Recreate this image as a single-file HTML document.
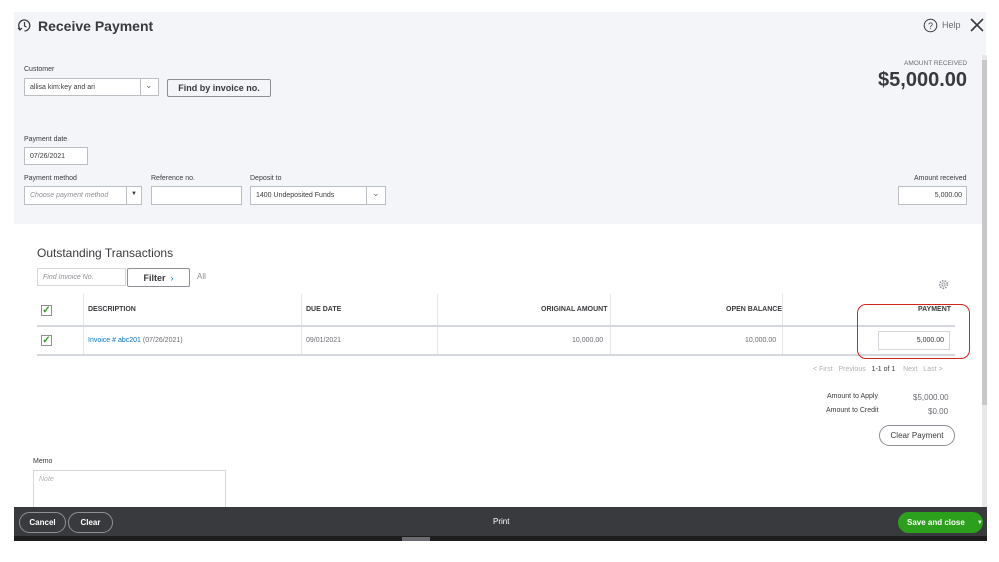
<!DOCTYPE html>
<html><head><meta charset="utf-8"><style>
*{box-sizing:border-box;margin:0;padding:0}
body{width:999px;height:562px;background:#fff;font-family:"Liberation Sans",sans-serif;color:#393a3d;position:relative;overflow:hidden}
.a{position:absolute}
.hdr{left:14px;top:12px;width:972px;height:212px;background:#f4f5f8}
.lbl{font-size:7px;color:#393a3d}
.inp{background:#fff;border:1px solid #bbbec3;font-size:7px;color:#393a3d;padding-left:5px;display:flex;align-items:center}
.th{font-size:7px;font-weight:bold;color:#393a3d}
.td{font-size:7px;color:#6b6c72}
.cb{width:11px;height:11px;border:1px solid #8d9096;background:#fff;color:#2ca01c;font-size:10px;line-height:9px;text-align:center;font-weight:bold}
.vl{width:1px;background:#e3e5e8}
.btn{border:1px solid #8d9096;border-radius:12px;color:#fff;font-size:8px;font-weight:bold;display:flex;align-items:center;justify-content:center}
</style></head><body>
<div class="a hdr"></div>
<svg class="a" style="left:17px;top:18px" width="15" height="15" viewBox="0 0 15 15"><path d="M3 11A5.5 5.5 0 1 1 7.5 13" fill="none" stroke="#393a3d" stroke-width="1.3"/><path d="M1 10l2 2 2-2" fill="none" stroke="#393a3d" stroke-width="1.2"/><path d="M7.5 4v4l2 1" fill="none" stroke="#393a3d" stroke-width="1.2"/></svg>
<div class="a" style="left:38px;top:18px;font-size:14px;font-weight:bold">Receive Payment</div>
<svg class="a" style="left:923px;top:18px" width="15" height="15" viewBox="0 0 15 15"><circle cx="7.5" cy="7.5" r="6.3" fill="none" stroke="#393a3d" stroke-width="1"/><text x="7.5" y="11" font-size="9" text-anchor="middle" font-family="Liberation Sans" fill="#393a3d">?</text></svg>
<div class="a" style="left:942px;top:20px;font-size:9px;color:#6b6c72">Help</div>
<svg class="a" style="left:970px;top:18px" width="14" height="14" viewBox="0 0 14 14"><path d="M1 1L13 13M13 1L1 13" stroke="#393a3d" stroke-width="1.6"/></svg>
<div class="a lbl" style="left:24px;top:66px">Customer</div>
<div class="a inp" style="left:24px;top:78px;width:135px;height:18px">allisa kim:key and ari</div>
<div class="a" style="left:140px;top:79px;width:1px;height:16px;background:#bbbec3"></div>
<div class="a" style="left:145px;top:80px;font-size:9px;color:#6b6c72">⌄</div>
<div class="a" style="left:167px;top:79px;width:104px;height:18px;border:1px solid #8d9096;border-radius:2px;background:#f4f5f8;font-size:9px;font-weight:bold;display:flex;align-items:center;justify-content:center">Find by invoice no.</div>
<div class="a" style="left:904px;top:60px;font-size:6.5px;color:#6b6c72">AMOUNT RECEIVED</div>
<div class="a" style="left:860px;top:69px;width:107px;text-align:right;font-size:20px;font-weight:bold;color:#393a3d">$5,000.00</div>
<div class="a lbl" style="left:24px;top:136px">Payment date</div>
<div class="a inp" style="left:24px;top:147px;width:64px;height:18px">07/26/2021</div>
<div class="a lbl" style="left:24px;top:175px">Payment method</div>
<div class="a inp" style="left:24px;top:186px;width:118px;height:19px;color:#8d9096;font-style:italic">Choose payment method</div>
<div class="a" style="left:126px;top:187px;width:1px;height:17px;background:#bbbec3"></div>
<div class="a" style="left:131px;top:191px;font-size:6px">▼</div>
<div class="a lbl" style="left:151px;top:175px">Reference no.</div>
<div class="a inp" style="left:151px;top:186px;width:91px;height:19px"></div>
<div class="a lbl" style="left:250px;top:175px">Deposit to</div>
<div class="a inp" style="left:250px;top:186px;width:136px;height:19px">1400 Undeposited Funds</div>
<div class="a" style="left:366px;top:187px;width:1px;height:17px;background:#bbbec3"></div>
<div class="a" style="left:372px;top:188px;font-size:9px;color:#6b6c72">⌄</div>
<div class="a lbl" style="left:914px;top:175px">Amount received</div>
<div class="a inp" style="left:898px;top:186px;width:69px;height:19px;justify-content:flex-end;padding-right:4px">5,000.00</div>
<div class="a" style="left:37px;top:246px;font-size:12px;color:#393a3d">Outstanding Transactions</div>
<div class="a inp" style="left:37px;top:268px;width:89px;height:18px;color:#8d9096;font-style:italic;border-color:#d4d7dc">Find Invoice No.</div>
<div class="a" style="left:127px;top:268px;width:63px;height:19px;border:1px solid #8d9096;border-radius:2px;font-size:9px;font-weight:bold;display:flex;align-items:center;justify-content:center">Filter <span style="color:#0077c5;margin-left:5px;font-weight:normal">›</span></div>
<div class="a" style="left:197px;top:272px;font-size:8px;color:#8d9096">All</div>
<svg class="a" style="left:938px;top:279px" width="11" height="11" viewBox="0 0 11 11"><circle cx="5.5" cy="5.5" r="3.8" fill="none" stroke="#8d9096" stroke-width="1.6" stroke-dasharray="1.5 1.2"/><circle cx="5.5" cy="5.5" r="1.6" fill="none" stroke="#8d9096" stroke-width="0.8"/></svg>
<div class="a vl" style="left:83px;top:294px;height:62px"></div>
<div class="a vl" style="left:301px;top:294px;height:62px"></div>
<div class="a vl" style="left:437px;top:294px;height:62px"></div>
<div class="a vl" style="left:610px;top:294px;height:62px"></div>
<div class="a vl" style="left:782px;top:294px;height:62px"></div>
<div class="a" style="left:37px;top:325px;width:918px;height:2px;background:#d4d7dc"></div>
<div class="a" style="left:37px;top:354px;width:918px;height:2px;background:#d4d7dc"></div>
<div class="a cb" style="left:41px;top:305px">✓</div>
<div class="a th" style="left:88px;top:306px">DESCRIPTION</div>
<div class="a th" style="left:306px;top:306px">DUE DATE</div>
<div class="a th" style="left:541px;top:306px">ORIGINAL AMOUNT</div>
<div class="a th" style="left:726px;top:306px">OPEN BALANCE</div>
<div class="a th" style="left:918px;top:306px">PAYMENT</div>
<div class="a cb" style="left:41px;top:335px">✓</div>
<div class="a td" style="left:88px;top:337px"><span style="color:#0077c5">Invoice # abc201</span> (07/26/2021)</div>
<div class="a td" style="left:306px;top:337px">09/01/2021</div>
<div class="a td" style="left:572px;top:337px">10,000.00</div>
<div class="a td" style="left:745px;top:337px">10,000.00</div>
<div class="a inp" style="left:878px;top:331px;width:72px;height:19px;justify-content:flex-end;padding-right:5px;border-color:#d4d7dc">5,000.00</div>
<div class="a" style="left:857px;top:304px;width:113px;height:55px;border:1.3px solid #d0271d;border-radius:9px"></div>
<div class="a" style="left:813px;top:366px;font-size:7px;color:#b0b2b6">&lt; First &nbsp;&nbsp;Previous &nbsp;&nbsp;<span style="color:#393a3d">1-1 of 1</span> &nbsp;&nbsp;&nbsp;Next &nbsp;&nbsp;Last &gt;</div>
<div class="a" style="left:827px;top:393px;font-size:7px">Amount to Apply</div>
<div class="a" style="left:913px;top:393px;font-size:8px;color:#6b6c72">$5,000.00</div>
<div class="a" style="left:826px;top:407px;font-size:7px">Amount to Credit</div>
<div class="a" style="left:928px;top:407px;font-size:8px;color:#6b6c72">$0.00</div>
<div class="a" style="left:879px;top:425px;width:76px;height:21px;border:1px solid #8d9096;border-radius:11px;font-size:8px;display:flex;align-items:center;justify-content:center">Clear Payment</div>
<div class="a lbl" style="left:33px;top:458px">Memo</div>
<div class="a inp" style="left:33px;top:470px;width:193px;height:40px;align-items:flex-start;padding-top:5px;color:#b0b2b6;font-style:italic;border-color:#d4d7dc">Note</div>
<div class="a" style="left:982px;top:55px;width:5px;height:453px;background:#e8e8e8"></div>
<div class="a" style="left:982px;top:60px;width:5px;height:345px;background:#c8c8c8"></div>
<div class="a" style="left:14px;top:507px;width:973px;height:31px;background:#393a3d"></div>
<div class="a" style="left:14px;top:536px;width:973px;height:5px;background:#1e1e1f"></div>
<div class="a" style="left:402px;top:537px;width:28px;height:4px;background:#6b6c72"></div>
<div class="a btn" style="left:19px;top:512px;width:47px;height:21px">Cancel</div>
<div class="a btn" style="left:68px;top:512px;width:45px;height:21px">Clear</div>
<div class="a" style="left:493px;top:517px;font-size:8px;color:#fff">Print</div>
<div class="a" style="left:898px;top:512px;width:85px;height:21px;background:#2ca01c;border-radius:11px;color:#fff;font-size:8px;font-weight:bold;display:flex;align-items:center;padding-left:9px">Save and close<span style="margin-left:12px;font-size:6px">▼</span></div>
</body></html>
